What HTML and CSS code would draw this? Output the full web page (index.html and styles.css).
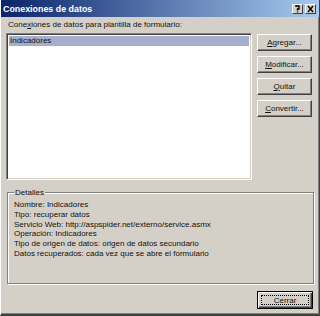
FILE: index.html
```html
<!DOCTYPE html>
<html lang="es">
<head>
<meta charset="utf-8">
<title>Conexiones de datos</title>
<link rel="stylesheet" href="styles.css">
</head>
<body>
<div class="window">
  <div class="titlebar">
    <span class="title">Conexiones de datos</span>
    <span class="tbtns">
      <span class="tbtn">
        <svg width="9" height="8" viewBox="0 0 9 8"><path d="M3 2 V1 H6 V4 H4.5 V5.5 M4.5 6.5 V7.5" fill="none" stroke="#000" stroke-width="1.4"/></svg>
      </span>
      <span class="tbtn">
        <svg width="9" height="8" viewBox="0 0 9 8"><path d="M2 1 L7 7 M7 1 L2 7" fill="none" stroke="#000" stroke-width="1.4"/></svg>
      </span>
    </span>
  </div>
  <div class="content">
    <div class="main">
      <div class="left">
        <div class="label">Cone<u>x</u>iones de datos para plantilla de formulario:</div>
        <div class="listbox">
          <div class="item selected">Indicadores</div>
        </div>
      </div>
      <div class="right">
        <button class="btn"><u>A</u>gregar...</button>
        <button class="btn"><u>M</u>odificar...</button>
        <button class="btn"><u>Q</u>uitar</button>
        <button class="btn"><u>C</u>onvertir...</button>
      </div>
    </div>
    <fieldset class="group">
      <legend>Detalles</legend>
      <div class="line">Nombre: Indicadores</div>
      <div class="line">Tipo: recuperar datos</div>
      <div class="line">Servicio Web: http://aspspider.net/externo/service.asmx</div>
      <div class="line">Operación: Indicadores</div>
      <div class="line">Tipo de origen de datos: origen de datos secundario</div>
      <div class="line">Datos recuperados: cada vez que se abre el formulario</div>
    </fieldset>
    <div class="footer">
      <button class="btn default"><span class="focus">Cerrar</span></button>
    </div>
  </div>
</div>
</body>
</html>
```
FILE: styles.css
```css
html, body {
  margin: 0;
  padding: 0;
  background: #D4D0C8;
}
.window {
  width: 320px;
  height: 316px;
  box-sizing: border-box;
  background: #D4D0C8;
  border-left: 1px solid #ffffff;
  border-right: 1px solid #404040;
  border-bottom: 2px solid #404040;
  box-shadow: inset -1px -1px 0 #808080;
  display: flex;
  flex-direction: column;
  font-family: "Liberation Sans", Arial, sans-serif;
  font-size: 8px;
  color: #111;
}
.titlebar {
  height: 17px;
  flex: none;
  background: linear-gradient(to right, #0A246A, #A6CAF0);
  display: flex;
  align-items: center;
  justify-content: space-between;
  padding: 0 3px 0 2px;
}
.title {
  color: #fff;
  font-weight: bold;
  font-size: 8.9px;
}
.tbtns {
  display: flex;
  gap: 2px;
}
.tbtn {
  width: 11px;
  height: 10px;
  box-sizing: border-box;
  background: #D4D0C8;
  border: 1px solid;
  border-color: #fff #404040 #404040 #fff;
  display: flex;
  align-items: center;
  justify-content: center;
}
.tbtn svg { display: block; }
.content {
  flex: 1;
  display: flex;
  flex-direction: column;
  padding: 3px 6px 0 5px;
}
.main {
  display: flex;
  gap: 5px;
}
.left {
  display: flex;
  flex-direction: column;
  width: 246px;
}
.label {
  height: 10px;
  line-height: 10px;
  padding-left: 2px;
  margin-bottom: 3px;
  white-space: nowrap;
}
.listbox {
  height: 147px;
  box-sizing: border-box;
  background: #fff;
  border: 1px solid;
  border-color: #808080 #fff #fff #808080;
  box-shadow: inset 1px 1px 0 #404040, inset -1px -1px 0 #D4D0C8;
  padding: 2px 2px;
}
.item {
  height: 10px;
  line-height: 10px;
  padding-left: 1px;
}
.item.selected {
  background: #A6AECD;
}
.right {
  display: flex;
  flex-direction: column;
  gap: 5px;
  padding-top: 14px;
}
.btn {
  width: 55px;
  height: 17px;
  box-sizing: border-box;
  margin: 0;
  padding: 0;
  background: #D4D0C8;
  border: 1px solid;
  border-color: #fff #404040 #404040 #fff;
  box-shadow: inset -1px -1px 0 #808080;
  font-family: "Liberation Sans", Arial, sans-serif;
  font-size: 8px;
  color: #111;
  text-align: center;
  line-height: 13px;
}
.group {
  margin: 8px 0 0 1px;
  width: 307px;
  height: 96px;
  box-sizing: border-box;
  border: 1px solid #808080;
  box-shadow: 1px 1px 0 #fff, inset 1px 1px 0 #fff;
  padding: 3px 6px 0 6px;
}
.group legend {
  padding: 0 1px;
  margin-left: 0;
  background: #D4D0C8;
  line-height: 9px;
}
.line {
  height: 9.75px;
  line-height: 9.75px;
  white-space: nowrap;
}
.footer {
  display: flex;
  justify-content: flex-end;
  padding-top: 7px;
}
.btn.default {
  width: 56px;
  height: 18px;
  border: 1px solid #000;
  box-shadow: inset 1px 1px 0 #fff, inset -1px -1px 0 #404040, inset -2px -2px 0 #808080;
  padding: 3px;
  display: flex;
}
.focus {
  flex: 1;
  border: 1px dotted #000;
  line-height: 9px;
}
```
